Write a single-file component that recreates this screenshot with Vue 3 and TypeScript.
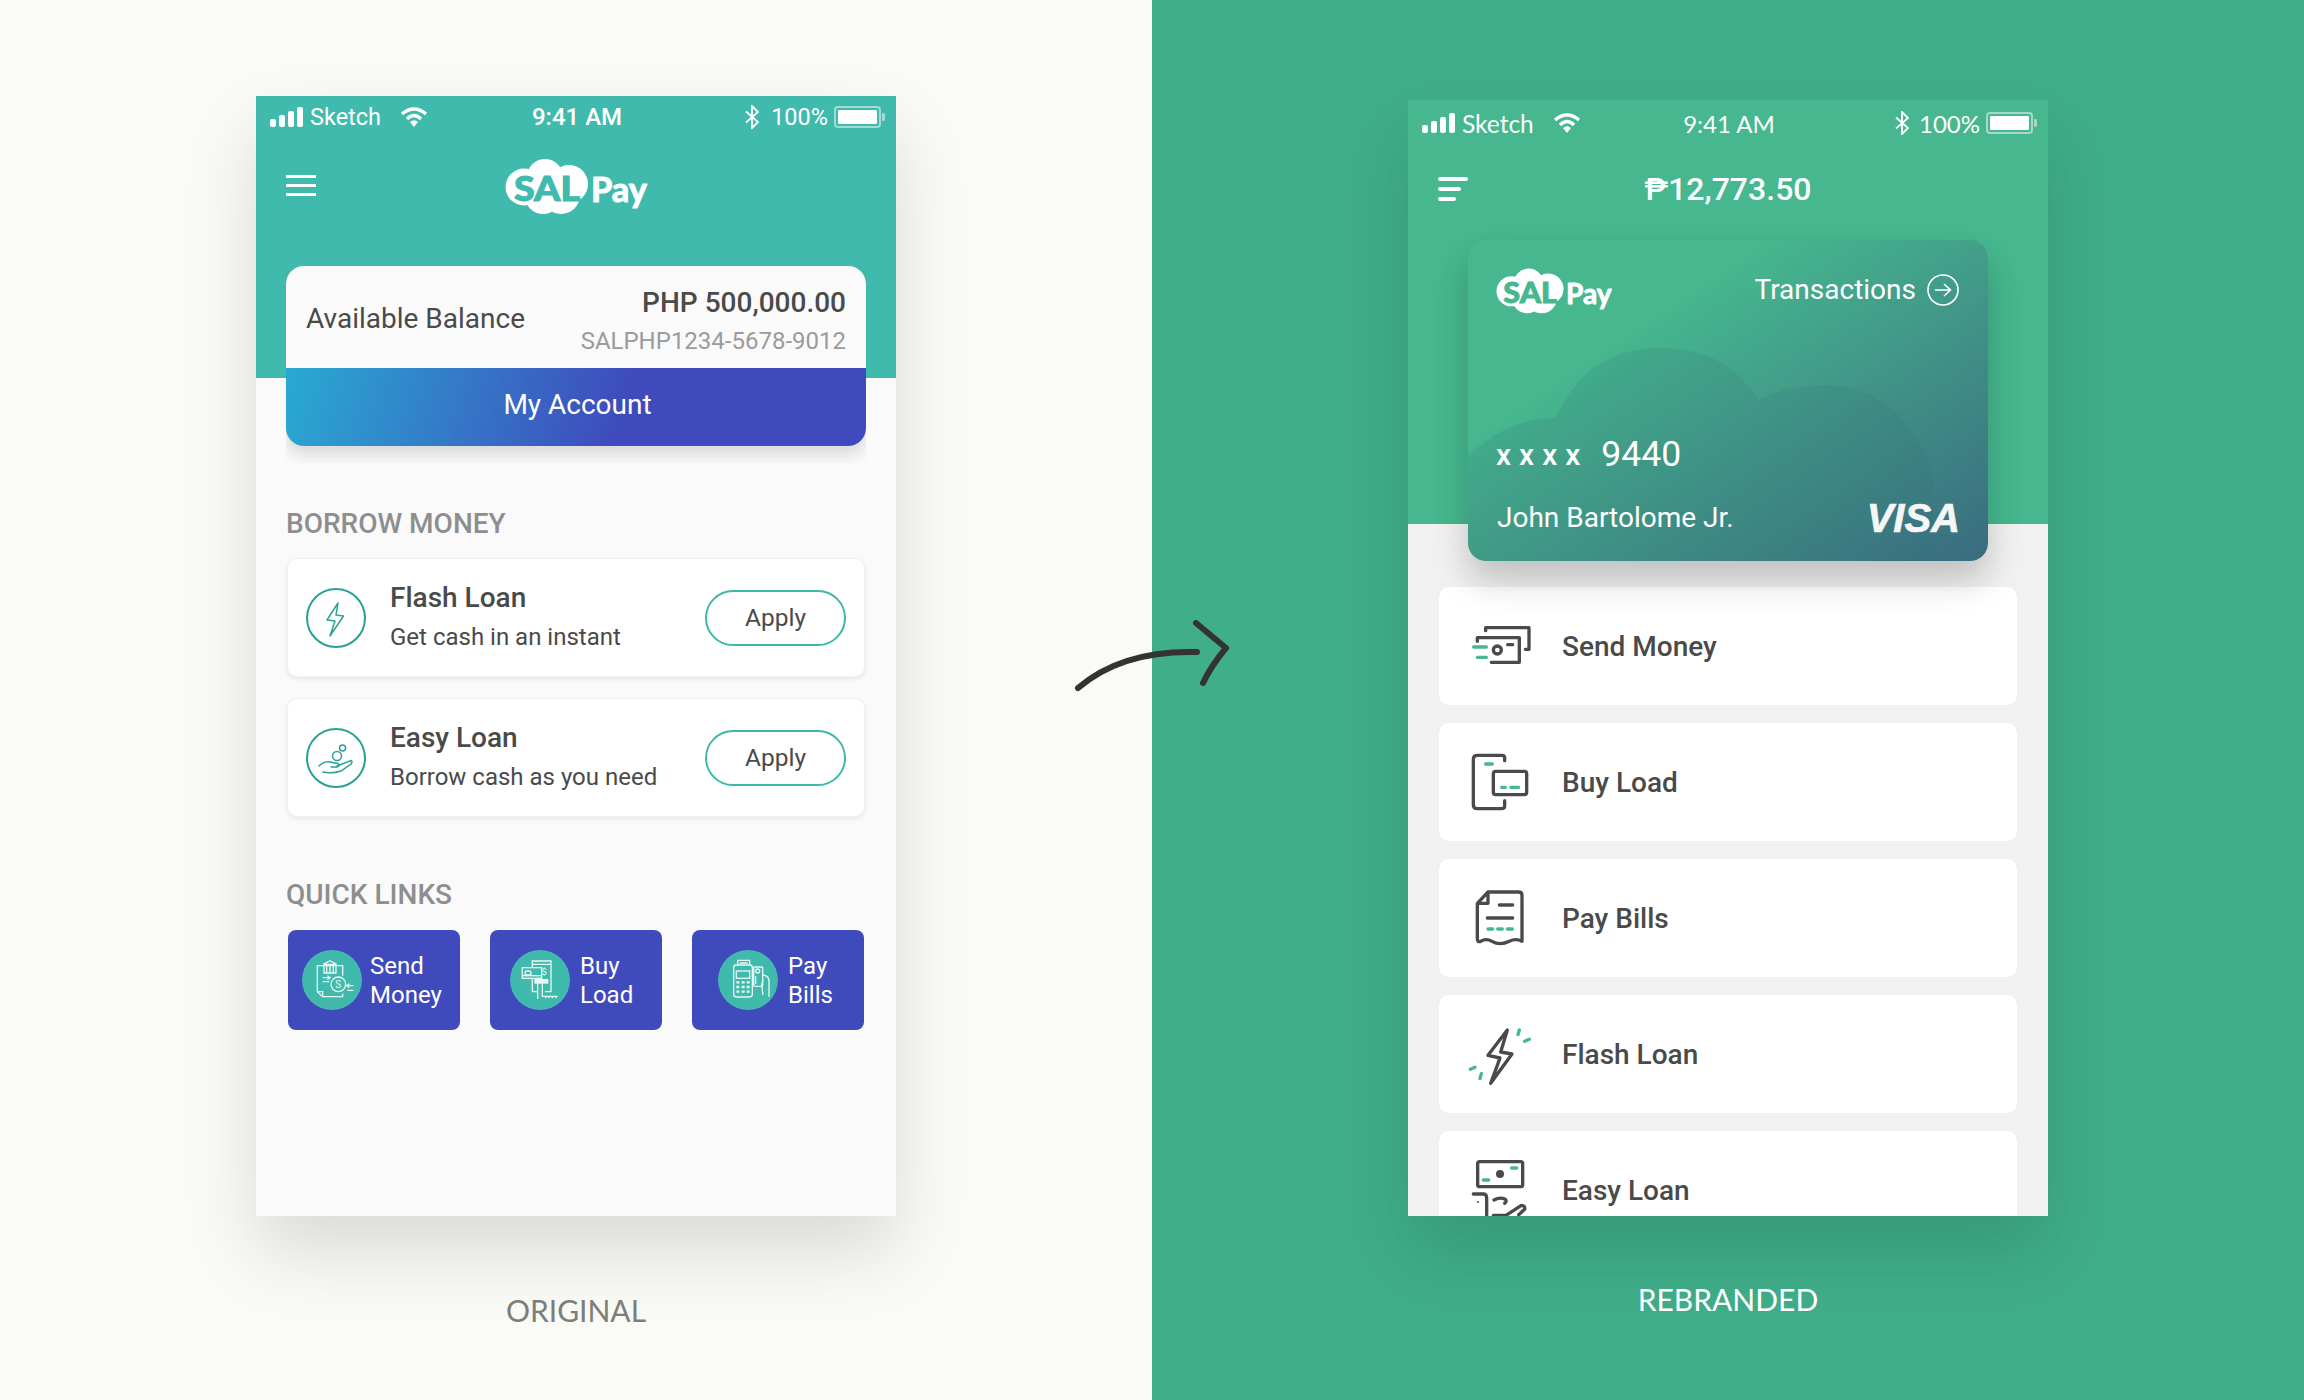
<script setup lang="ts">
const loans = [
  { id: "flash", title: "Flash Loan", sub: "Get cash in an instant" },
  { id: "easy", title: "Easy Loan", sub: "Borrow cash as you need" },
]

const quickLinks = [
  { id: "send", top: "Send", bottom: "Money" },
  { id: "buy", top: "Buy", bottom: "Load" },
  { id: "pay", top: "Pay", bottom: "Bills" },
]

const rows = [
  { id: "send", label: "Send Money" },
  { id: "buy", label: "Buy Load" },
  { id: "pay", label: "Pay Bills" },
  { id: "flash", label: "Flash Loan" },
  { id: "easy", label: "Easy Loan" },
]
</script>

<template>
  <div class="page">
    <!-- original -->
    <section class="panel panel-old">
      <div class="phone phone-old">
        <div class="old-head">
          <div class="status">
            <div class="status-left">
              <svg class="signal" viewBox="0 0 34 20"><rect x="0" y="12" width="6" height="8" rx="2" /><rect x="9" y="8" width="6" height="12" rx="2" /><rect x="18" y="4" width="6" height="16" rx="2" /><rect x="27" y="0" width="6" height="20" rx="2" /></svg>
              <span>Sketch</span>
              <svg class="wifi" viewBox="0 0 28 20"><path d="M2 7Q14-3 26 7M7 12Q14 5 21 12" fill="none" stroke="#fff" stroke-width="3.4" /><path d="M10 15Q14 11.500 18 15L14 20Z" fill="#fff" /></svg>
            </div>
            <span class="time">9:41 AM</span>
            <div class="status-right">
              <svg class="bt" viewBox="0 0 16 24"><path d="M2 6.500L14 17 8 23V1L14 7 2 17.500" fill="none" stroke="#fff" stroke-width="1.800" /></svg>
              <span>100%</span>
              <div class="battery"><i></i></div>
            </div>
          </div>
          <div class="old-nav">
            <div class="burger"><i></i><i></i><i></i></div>
            <svg class="logo" viewBox="0 0 150 70">
              <g fill="#fff">
                <circle cx="24" cy="36" r="18.500" /><circle cx="45" cy="26" r="18" /><circle cx="69" cy="33" r="19" /><circle cx="43" cy="45" r="18" /><circle cx="61" cy="44" r="19" />
              </g>
              <text x="14" y="50" class="logo-sal" fill="#41baae" stroke="#41baae" textLength="66" lengthAdjust="spacingAndGlyphs">SAL</text>
              <text x="91" y="51" class="logo-pay" fill="#fff" stroke="#fff" textLength="56" lengthAdjust="spacingAndGlyphs">Pay</text>
            </svg>
            <span></span>
          </div>
        </div>

        <div class="balance">
          <div class="balance-top">
            <span class="balance-label">Available Balance</span>
            <div class="balance-right">
              <strong>PHP 500,000.00</strong>
              <span>SALPHP1234-5678-9012</span>
            </div>
          </div>
          <div class="balance-btn">My Account</div>
        </div>

        <h3 class="sec sec-borrow">BORROW MONEY</h3>
        <div class="loans">
          <div v-for="l in loans" :key="l.id" class="loan">
            <svg class="loan-ic" viewBox="0 0 60 60" fill="none" stroke="#2ba196" stroke-width="1.500">
              <circle cx="30" cy="30" r="29" stroke-width="2" />
              <path v-if="l.id === 'flash'" d="M32 15 21 32l8 1-5 15 13.500-20-7.500-1Z" stroke-linejoin="round" />
              <g v-else stroke-linecap="round">
                <circle cx="31" cy="28" r="4.500" /><circle cx="36.600" cy="20" r="3" />
                <path d="M13 38Q18 33 24 34L32 35.500Q35 38 31 39L25 39M31 38 45 32.500Q47 33 45 36L35 43Q26 46 17 44" />
              </g>
            </svg>
            <div class="loan-text">
              <b>{{ l.title }}</b>
              <span>{{ l.sub }}</span>
            </div>
            <div class="apply">Apply</div>
          </div>
        </div>

        <h3 class="sec sec-quick">QUICK LINKS</h3>
        <div class="quick">
          <div v-for="q in quickLinks" :key="q.id" class="quick-btn">
            <svg class="quick-ic" viewBox="0 0 180 180" fill="none" stroke="#e8f7f4" stroke-width="4">
              <circle cx="90" cy="90" r="90" fill="#41baae" stroke="none" />
              <g v-if="q.id === 'send'" transform="translate(-6 -15)">
                <path d="M72 62H52V140L68 155H128V146M108 62H128V92M52 140H68V155" />
                <path d="M70 58 90 47 110 58ZM72 62H108V84H72ZM80 62V84M90 62V84M100 62V84" />
                <circle cx="115" cy="118" r="22" />
                <text x="115" y="128" text-anchor="middle" class="ic-s" stroke="none" fill="#e8f7f4">S</text>
                <path d="M68 98H88M82 92 90 98 82 104M68 110H88M160 122H142M148 116 140 122 148 128M160 136H142" />
              </g>
              <g v-else-if="q.id === 'buy'" transform="translate(-15 -15)">
                <path d="M82 68V48H138V140H120M82 58H138M82 100V140H96" />
                <rect x="52" y="68" width="58" height="32" fill="#41baae" />
                <rect x="60" y="78" width="18" height="12" rx="6" />
                <path d="M52 92H110" />
                <text x="117" y="90" text-anchor="middle" class="ic-d" stroke="none" fill="#e8f7f4">$</text>
                <path d="M88 102H130V116H88Z" fill="#e8f7f4" stroke="none" />
                <path d="M98 162V116Q105 106 112 116V154H158M122 154V160M132 154V160M142 154V160M152 154V160" />
              </g>
              <g v-else transform="translate(-15 -15)">
                <path d="M74 60V46H110V60M80 54H104" />
                <rect x="62" y="60" width="56" height="96" rx="8" />
                <rect x="70" y="78" width="40" height="22" />
                <path d="M70 112h9M86 112h9M101 112h9M70 126h9M86 126h9M101 126h9M70 140h9M86 140h9M101 140h9" stroke-width="7" />
                <rect x="122" y="66" width="27" height="58" rx="3" />
                <circle cx="134" cy="78" r="6" />
                <path d="M128 94V118M150 90Q166 92 168 106V156M150 104 146 120 150 150" />
              </g>
            </svg>
            <div class="quick-text">
              <span>{{ q.top }}</span>
              <span>{{ q.bottom }}</span>
            </div>
          </div>
        </div>
      </div>
      <p class="caption caption-old">ORIGINAL</p>
    </section>

    <!-- rebranded -->
    <section class="panel panel-new">
      <div class="phone phone-new">
        <div class="new-head">
          <div class="status status-new">
            <div class="status-left">
              <svg class="signal" viewBox="0 0 34 20"><rect x="0" y="12" width="6" height="8" rx="2" /><rect x="9" y="8" width="6" height="12" rx="2" /><rect x="18" y="4" width="6" height="16" rx="2" /><rect x="27" y="0" width="6" height="20" rx="2" /></svg>
              <span>Sketch</span>
              <svg class="wifi" viewBox="0 0 28 20"><path d="M2 7Q14-3 26 7M7 12Q14 5 21 12" fill="none" stroke="#fff" stroke-width="3.4" /><path d="M10 15Q14 11.500 18 15L14 20Z" fill="#fff" /></svg>
            </div>
            <span class="time">9:41 AM</span>
            <div class="status-right">
              <svg class="bt" viewBox="0 0 16 24"><path d="M2 6.500L14 17 8 23V1L14 7 2 17.500" fill="none" stroke="#fff" stroke-width="1.800" /></svg>
              <span>100%</span>
              <div class="battery"><i></i></div>
            </div>
          </div>
          <div class="new-nav">
            <div class="burger-new"><i></i><i></i><i></i></div>
            <span class="amount">₱12,773.50</span>
            <span></span>
          </div>

          <div class="bank-card">
            <svg class="card-cloud" viewBox="0 0 520 321">
              <path d="M0 216Q40 178 88 178 118 108 193 108 258 108 290 160 320 145 353 145 440 145 466 243V321H0Z" fill="#2f6d78" fill-opacity=".16" />
            </svg>
            <div class="card-top">
              <svg class="logo-small" viewBox="0 0 150 70">
                <g fill="#fff">
                  <circle cx="24" cy="36" r="18.500" /><circle cx="45" cy="26" r="18" /><circle cx="69" cy="33" r="19" /><circle cx="43" cy="45" r="18" /><circle cx="61" cy="44" r="19" />
                </g>
                <text x="14" y="50" class="logo-sal" fill="#46b78e" stroke="#46b78e" textLength="66" lengthAdjust="spacingAndGlyphs">SAL</text>
                <text x="91" y="51" class="logo-pay" fill="#fff" stroke="#fff" textLength="56" lengthAdjust="spacingAndGlyphs">Pay</text>
              </svg>
              <div class="transactions">
                <span>Transactions</span>
                <svg viewBox="0 0 32 32" fill="none" stroke="#fff" stroke-width="1.600"><circle cx="16" cy="16" r="15" /><path d="M8 16H23M17 10 23.500 16 17 22" /></svg>
              </div>
            </div>
            <div class="card-number"><span class="mask">xxxx</span><span>9440</span></div>
            <div class="card-bottom">
              <span>John Bartolome Jr.</span>
              <em class="visa">VISA</em>
            </div>
          </div>
        </div>

        <div class="rows">
          <div v-for="r in rows" :key="r.id" class="row">
            <svg v-if="r.id === 'send'" class="row-ic" viewBox="144 90 216 216">
              <path class="dk" d="M197 152V143H327V208H316M172 184V173H298V247H214" />
              <circle class="dk" cx="232" cy="210" r="12" />
              <path class="dk" d="M263 194H278" />
              <path class="gr" d="M161 201H199M172 232H199" />
            </svg>
            <svg v-else-if="r.id === 'buy'" class="row-ic" viewBox="144 498 216 216">
              <path class="dk" d="M254 542V534Q254 526 246 526H172Q160 526 160 538V674Q160 686 172 686H244Q254 686 254 678V662" />
              <rect class="dk" x="220" y="574" width="100" height="70" rx="7" />
              <path class="gr" d="M197 552H217M245 622H256M273 622H296" />
            </svg>
            <svg v-else-if="r.id === 'pay'" class="row-ic" viewBox="24 36 216 216">
              <path class="dk" d="M84 66H176Q186 66 186 76V214Q168 204 148 214Q120 228 96 214Q78 204 62 214Q52 218 52 206V100L84 66V100H52" />
              <path class="dk" d="M118 105H158M82 144H158" />
              <path class="gr" d="M84 177H98M113 177H127M142 177H157" />
            </svg>
            <svg v-else-if="r.id === 'flash'" class="row-ic" viewBox="144 114 216 216">
              <path class="dk" d="M262 150 204 226 240 234 212 310 276 222 242 216Z" />
              <path class="gr" d="M298 150 294 164M314 184 328 178M151 268 165 262M184 281 180 296" />
            </svg>
            <svg v-else class="row-ic" viewBox="144 522 216 216">
              <rect class="dk" x="173" y="545" width="135" height="75" rx="6" />
              <circle cx="240" cy="582" r="12" fill="#4a4a4a" />
              <path class="gr" d="M275 564H290M190 600H206" />
              <path class="dk" d="M160 642H190Q200 642 200 654V730M222 660Q240 650 256 658Q262 664 254 670M220 706H258L304 676Q316 676 314 688L296 704" />
              <circle cx="174" cy="666" r="3" fill="#4a4a4a" />
            </svg>
            <span>{{ r.label }}</span>
          </div>
        </div>
      </div>
      <p class="caption caption-new">REBRANDED</p>
    </section>

    <svg class="arrow" viewBox="0 0 170 90" fill="none" stroke="#333" stroke-width="6" stroke-linecap="round" stroke-linejoin="round">
      <path d="M8 68Q52 30 127 32M126 3 156 28Q141 46 133 63" />
    </svg>
  </div>
</template>

<style scoped>
.page {
  position: relative;
  width: 2304px;
  height: 1400px;
  display: grid;
  grid-template-columns: 1152px 1152px;
  overflow: hidden;
  font-family: Roboto, "Liberation Sans", sans-serif;
  color: #4a4a4a;
}
.panel {
  display: flex;
  flex-direction: column;
  align-items: flex-start;
  padding-left: 256px;
  box-sizing: border-box;
}
.panel-old {
  background: #fafaf6;
  padding-top: 96px;
}
.panel-new {
  background: #40ae89;
  padding-top: 100px;
}
.phone {
  width: 640px;
  overflow: hidden;
  box-shadow: 0 36px 70px rgba(0, 0, 0, 0.13);
}
.phone-old {
  height: 1120px;
  background: #fafafa;
  overflow: visible;
}
.phone-new {
  height: 1116px;
  background: #f1f1f1;
}
.caption {
  width: 640px;
  margin: 0;
  text-align: center;
  font-family: Lato, sans-serif;
  font-size: 30px;
  line-height: 40px;
}
.caption-old {
  margin-top: 74px;
  color: #7d7d79;
}
.caption-new {
  margin-top: 63px;
  color: #fff;
}

/* status bar */
.status {
  height: 42px;
  padding: 0 10px 0 14px;
  display: grid;
  grid-template-columns: 1fr auto 1fr;
  align-items: center;
  color: #fff;
  font-size: 23.5px;
}
.status-new {
  height: 46px;
  font-family: Lato, sans-serif;
  font-size: 24.5px;
}
.status-left,
.status-right {
  display: flex;
  align-items: center;
}
.status-right {
  justify-content: flex-end;
}
.signal {
  width: 34px;
  height: 20px;
  fill: #fff;
  margin-right: 6px;
}
.wifi {
  width: 28px;
  height: 20px;
  margin-left: 19px;
}
.bt {
  width: 16px;
  height: 24px;
  margin-right: 11px;
}
.time {
  font-size: 24px;
  font-weight: 500;
  margin-left: -2px;
}
.status-new .time {
  font-weight: 400;
}
.status-new .status-right span {
  font-size: 24px;
}
.status-new .bt {
  margin-right: 9px;
}
.battery {
  position: relative;
  width: 47px;
  height: 22px;
  margin-left: 6px;
  margin-right: 5px;
  border: 2px solid rgba(255, 255, 255, 0.5);
  border-radius: 4px;
  box-sizing: border-box;
  padding: 2px;
}
.battery i {
  display: block;
  height: 100%;
  background: #fff;
  border-radius: 1px;
}
.battery::after {
  content: "";
  position: absolute;
  right: -6px;
  top: 5px;
  width: 3px;
  height: 8px;
  background: rgba(255, 255, 255, 0.5);
  border-radius: 0 2px 2px 0;
}

/* original header */
.old-head {
  height: 282px;
  background: #41baae;
}
.old-nav {
  height: 94px;
  padding: 0 30px;
  display: grid;
  grid-template-columns: 1fr 150px 1fr;
  align-items: center;
}
.burger {
  display: flex;
  flex-direction: column;
  gap: 6px;
  width: 30px;
}
.burger i {
  height: 3px;
  background: #fff;
}
.logo {
  width: 150px;
  height: 70px;
  margin: 1px 0 0 -1px;
}
.logo-sal {
  font-family: Lato, sans-serif;
  font-weight: 900;
  font-size: 34px;
  stroke-width: 1;
}
.logo-pay {
  font-family: Lato, sans-serif;
  font-weight: 700;
  font-size: 34px;
  stroke-width: 1;
  stroke-linejoin: round;
}
.balance {
  position: relative;
  margin: -112px 30px 0;
  height: 180px;
  border-radius: 18px;
  background: #fafafa;
  box-shadow: 0 9px 16px rgba(0, 0, 0, 0.13);
  clip-path: inset(0 0 -17px 0);
}
.balance-top {
  height: 102px;
  padding: 0 20px;
  display: flex;
  justify-content: space-between;
  align-items: center;
}
.balance-label {
  font-size: 28px;
  padding-top: 3px;
}
.balance-right {
  display: flex;
  flex-direction: column;
  align-items: flex-end;
  gap: 8px;
  padding-top: 7px;
}
.balance-right strong {
  font-size: 28px;
  font-weight: 500;
  line-height: 32px;
}
.balance-right span {
  font-size: 24px;
  line-height: 28px;
  color: #9b9b9b;
}
.balance-btn {
  height: 78px;
  box-sizing: border-box;
  padding: 0 0 6px 3px;
  border-radius: 0 0 18px 18px;
  background: linear-gradient(105deg, #29aad2 0%, #3f4bbd 58%);
  color: #fff;
  font-size: 28px;
  display: flex;
  align-items: center;
  justify-content: center;
}
.sec {
  margin: 0 0 0 30px;
  font-size: 28px;
  font-weight: 500;
  line-height: 32px;
  color: #8e8e8e;
}
.sec-borrow {
  margin-top: 62px;
}
.sec-quick {
  margin-top: 62px;
}
.loans {
  margin: 18px 31px 0;
  display: flex;
  flex-direction: column;
  gap: 21px;
}
.loan {
  height: 119px;
  box-sizing: border-box;
  padding: 0 18px;
  display: flex;
  align-items: center;
  background: #fff;
  border: 1px solid #f1f1f1;
  border-radius: 10px;
  box-shadow: 0 2px 5px rgba(0, 0, 0, 0.08);
}
.loan-ic {
  width: 60px;
  height: 60px;
  flex: none;
}
.loan-text {
  margin: 0 0 3px 24px;
  flex: 1;
  display: flex;
  flex-direction: column;
  gap: 9px;
}
.loan-text b {
  font-size: 28px;
  font-weight: 500;
  line-height: 33px;
}
.loan-text span {
  font-size: 24px;
  line-height: 28px;
}
.apply {
  width: 141px;
  height: 56px;
  box-sizing: border-box;
  border: 2px solid #3fb8a9;
  border-radius: 28px;
  display: flex;
  align-items: center;
  justify-content: center;
  font-size: 24.5px;
}
.quick {
  margin: 19px 0 0 32px;
  display: flex;
  gap: 30px;
}
.quick-btn {
  width: 172px;
  height: 100px;
  box-sizing: border-box;
  display: flex;
  align-items: center;
  gap: 8px;
  padding-left: 14px;
  background: #3f4bbd;
  border-radius: 8px;
}
.quick-btn:nth-child(2) {
  padding-left: 20px;
  gap: 10px;
}
.quick-btn:nth-child(3) {
  padding-left: 26px;
  gap: 10px;
}
.quick-ic {
  width: 60px;
  height: 60px;
  flex: none;
}
.ic-s {
  font-family: Roboto, sans-serif;
  font-size: 30px;
}
.ic-d {
  font-family: Roboto, sans-serif;
  font-size: 28px;
}
.quick-text {
  display: flex;
  flex-direction: column;
  font-size: 24px;
  line-height: 29px;
  color: #fff;
  padding-top: 2px;
}

/* rebranded header */
.new-head {
  height: 424px;
  background: #46b78e;
}
.new-nav {
  height: 94px;
  padding: 0 30px;
  display: grid;
  grid-template-columns: 1fr auto 1fr;
  align-items: center;
  padding-bottom: 8px;
  box-sizing: border-box;
}
.burger-new {
  display: flex;
  flex-direction: column;
  gap: 6px;
}
.burger-new i {
  height: 4px;
  border-radius: 2px;
  background: #fff;
}
.burger-new i:nth-child(1) {
  width: 30px;
}
.burger-new i:nth-child(2) {
  width: 23px;
}
.burger-new i:nth-child(3) {
  width: 18px;
}
.amount {
  font-size: 32px;
  font-weight: 500;
  color: #fff;
}
.bank-card {
  position: relative;
  margin: 0 60px;
  height: 321px;
  padding: 22px 29px 0;
  box-sizing: border-box;
  border-radius: 18px;
  display: flex;
  flex-direction: column;
  color: #fff;
  background: linear-gradient(146deg, #46b78e 30%, #3a6b80 100%);
  box-shadow: 0 20px 34px rgba(0, 0, 0, 0.2);
  overflow: hidden;
}
.card-cloud {
  position: absolute;
  left: 0;
  top: 0;
  width: 520px;
  height: 321px;
}
.card-top {
  position: relative;
  display: flex;
  justify-content: space-between;
  align-items: flex-start;
}
.logo-small {
  width: 122px;
  height: 57px;
  margin-left: -5px;
}
.transactions {
  display: flex;
  align-items: center;
  gap: 11px;
  font-size: 28px;
  margin-top: 11px;
}
.transactions svg {
  width: 32px;
  height: 32px;
}
.card-number {
  position: relative;
  margin: auto 0 0 -1px;
  display: flex;
  align-items: center;
  gap: 13px;
  font-size: 35.5px;
  line-height: 44px;
}
.mask {
  font-size: 30px;
  letter-spacing: 8px;
  font-weight: 500;
  margin-top: 3px;
}
.card-bottom {
  position: relative;
  margin: 23px 0 25px;
  display: flex;
  justify-content: space-between;
  align-items: center;
  font-size: 28px;
  line-height: 36px;
}
.visa {
  font-family: "Liberation Sans", sans-serif;
  font-size: 40px;
  font-weight: 700;
  font-style: italic;
  color: #f5f6f6;
  -webkit-text-stroke: 0.7px #f5f6f6;
  margin-right: -1px;
}
.rows {
  padding: 63px 31px 0;
  display: flex;
  flex-direction: column;
  gap: 18px;
}
.row {
  height: 118px;
  flex: none;
  box-sizing: border-box;
  padding-left: 29px;
  display: flex;
  align-items: center;
  gap: 22px;
  background: #fff;
  border-radius: 10px;
  font-size: 28px;
  font-weight: 500;
}
.row-ic {
  width: 72px;
  height: 72px;
  flex: none;
}
.dk,
.gr {
  fill: none;
  stroke-width: 10;
  stroke-linecap: round;
  stroke-linejoin: round;
}
.dk {
  stroke: #4a4a4a;
}
.gr {
  stroke: #46b78e;
}
.arrow {
  position: absolute;
  left: 1070px;
  top: 620px;
  width: 170px;
  height: 90px;
}
</style>
